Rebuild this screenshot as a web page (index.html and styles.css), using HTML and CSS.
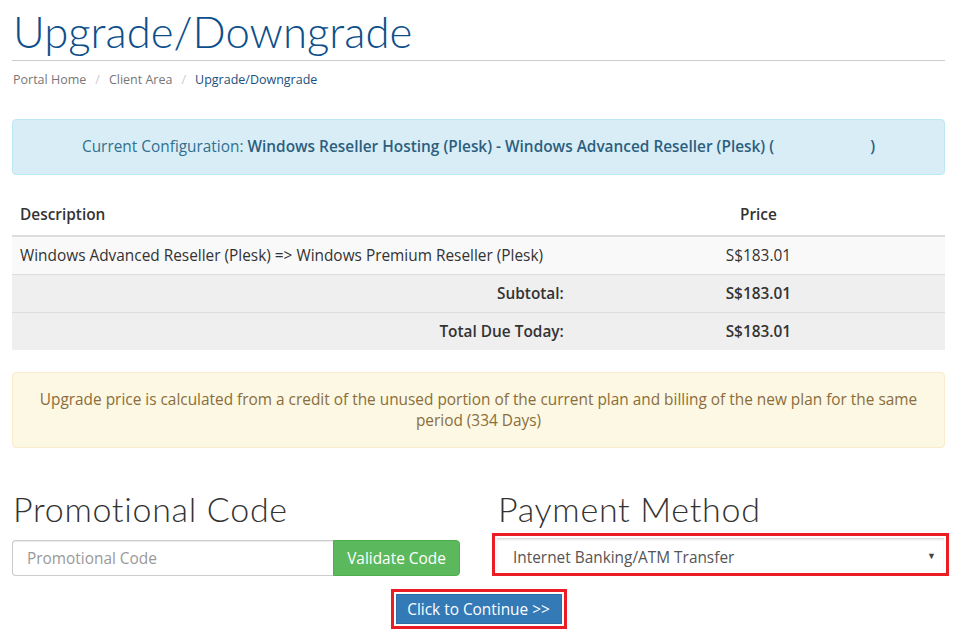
FILE: index.html
```html
<!DOCTYPE html>
<html>
<head>
<meta charset="utf-8">
<link rel="stylesheet" href="styles.css">
</head>
<body>
<div class="page">
  <div class="header">
    <h1 class="title">Upgrade/Downgrade</h1>
  </div>
  <ol class="breadcrumb">
    <li><a href="#">Portal Home</a></li>
    <li class="sep">/</li>
    <li><a href="#">Client Area</a></li>
    <li class="sep">/</li>
    <li class="active">Upgrade/Downgrade</li>
  </ol>

  <div class="alert alert-info">
    Current Configuration: <strong>Windows Reseller Hosting (Plesk) - Windows Advanced Reseller (Plesk) (<span class="blank"></span>)</strong>
  </div>

  <table class="table">
    <thead>
      <tr><th class="desc">Description</th><th class="price">Price</th></tr>
    </thead>
    <tbody>
      <tr class="item"><td>Windows Advanced Reseller (Plesk) =&gt; Windows Premium Reseller (Plesk)</td><td class="price">S$183.01</td></tr>
      <tr class="total"><td class="label">Subtotal:</td><td class="price">S$183.01</td></tr>
      <tr class="total"><td class="label">Total Due Today:</td><td class="price">S$183.01</td></tr>
    </tbody>
  </table>

  <div class="alert alert-warning">
    Upgrade price is calculated from a credit of the unused portion of the current plan and billing of the new plan for the same period (334 Days)
  </div>

  <div class="cols">
    <div class="col">
      <h2 class="subtitle">Promotional Code</h2>
      <div class="input-group">
        <input class="form-control" type="text" placeholder="Promotional Code">
        <button class="btn btn-success">Validate Code</button>
      </div>
    </div>
    <div class="col col-right">
      <h2 class="subtitle">Payment Method</h2>
      <div class="highlight">
        <div class="select">
          <span>Internet Banking/ATM Transfer</span>
          <span class="caret">&#9660;</span>
        </div>
      </div>
    </div>
  </div>

  <div class="actions">
    <div class="highlight">
      <button class="btn btn-primary">Click to Continue &gt;&gt;</button>
    </div>
  </div>
</div>
</body>
</html>
```

FILE: styles.css
```css
* { box-sizing: border-box; }
html, body { margin: 0; padding: 0; background: #fff; }
body {
  font-family: "Open Sans", "Liberation Sans", sans-serif;
  font-size: 15.4px;
  line-height: 21px;
  color: #333;
}
.page { padding: 0 18px 0 12px; }

.header { border-bottom: 1px solid #ccc; padding: 7px 0 5px 1px; }
.title {
  margin: 0;
  font-family: Lato, "Open Sans", sans-serif;
  font-weight: 300;
  font-size: 43.7px;
  line-height: 48px;
  color: #0d4f8b;
}

.breadcrumb {
  list-style: none;
  margin: 0;
  padding: 10px 0 0 1px;
  display: flex;
  gap: 9px;
  font-size: 12.5px;
  line-height: 18px;
  height: 58px;
}
.breadcrumb a { color: #777; text-decoration: none; }
.breadcrumb .sep { color: #ccc; }
.breadcrumb .active { color: #1b4f7e; }

.alert {
  border: 1px solid transparent;
  border-radius: 4px;
  text-align: center;
}
.alert-info {
  background: #d9edf7;
  border-color: #bce8f1;
  color: #31708f;
  padding: 16px 20px;
  height: 56px;
}
.alert-info strong { color: #2c5f7e; font-weight: 600; }
.alert-info .blank { display: inline-block; width: 96px; }

.table {
  width: 100%;
  border-collapse: collapse;
  margin-top: 21px;
}
.table th, .table td { padding: 8px 8px; text-align: left; }
.table th { font-weight: 600; border-bottom: 2px solid #ddd; padding-bottom: 10px; }
.table td { border-top: 1px solid #ddd; }
.table tbody tr:first-child td { border-top: 0; }
.table .desc { width: 60%; }
.table .price { text-align: center; }
.table .item td { background: #f9f9f9; }
.table .total td { background: #efefef; font-weight: 600; }
.table .total .label { text-align: right; }

.alert-warning {
  background: #fcf8e3;
  border-color: #faebcc;
  color: #8a6d3b;
  margin-top: 22px;
  padding: 16px 20px;
}

.cols {
  display: grid;
  grid-template-columns: 448px 448px;
  column-gap: 37px;
  margin-top: 39px;
}
.subtitle {
  margin: 0 0 9px 1px;
  font-family: Lato, "Open Sans", sans-serif;
  font-weight: 300;
  font-size: 34px;
  letter-spacing: 0.7px;
  line-height: 44px;
  color: #333;
}

.input-group { display: flex; height: 36px; }
.form-control {
  flex: 1;
  border: 1px solid #ccc;
  border-right: 0;
  border-radius: 4px 0 0 4px;
  font-family: inherit;
  font-size: 15.4px;
  padding: 6px 14px;
  color: #555;
  box-shadow: inset 0 1px 1px rgba(0,0,0,.075);
}
.form-control::placeholder { color: #999; }
.btn {
  font-family: inherit;
  font-size: 15.4px;
  border: 1px solid transparent;
  cursor: pointer;
}
.btn-success {
  background: #5cb85c;
  border-color: #4cae4c;
  color: #fff;
  border-radius: 0 4px 4px 0;
  padding: 6px 10px;
  width: 127px;
}

.col-right .highlight { margin: -7px -4px 0 -5px; }
.highlight {
  border: 3px solid #ec1c24;
  padding: 2px;
}
.select {
  height: 33px;
  display: flex;
  align-items: center;
  justify-content: space-between;
  padding: 5px 8px 0 16px;
  color: #555;
  background: #fff;
  box-shadow: inset 0 1px 2px rgba(0,0,0,.1);
  border-top: 1px solid #ddd;
}
.select .caret { font-size: 9px; color: #444; margin-top: -4px; }

.actions {
  display: flex;
  justify-content: center;
  margin-top: 13px;
}
.btn-primary {
  display: block;
  background: #337ab7;
  border-color: #2e6da4;
  color: #fff;
  border-radius: 0;
  padding: 4px 8px;
  width: 166px;
  height: 30px;
}
```
